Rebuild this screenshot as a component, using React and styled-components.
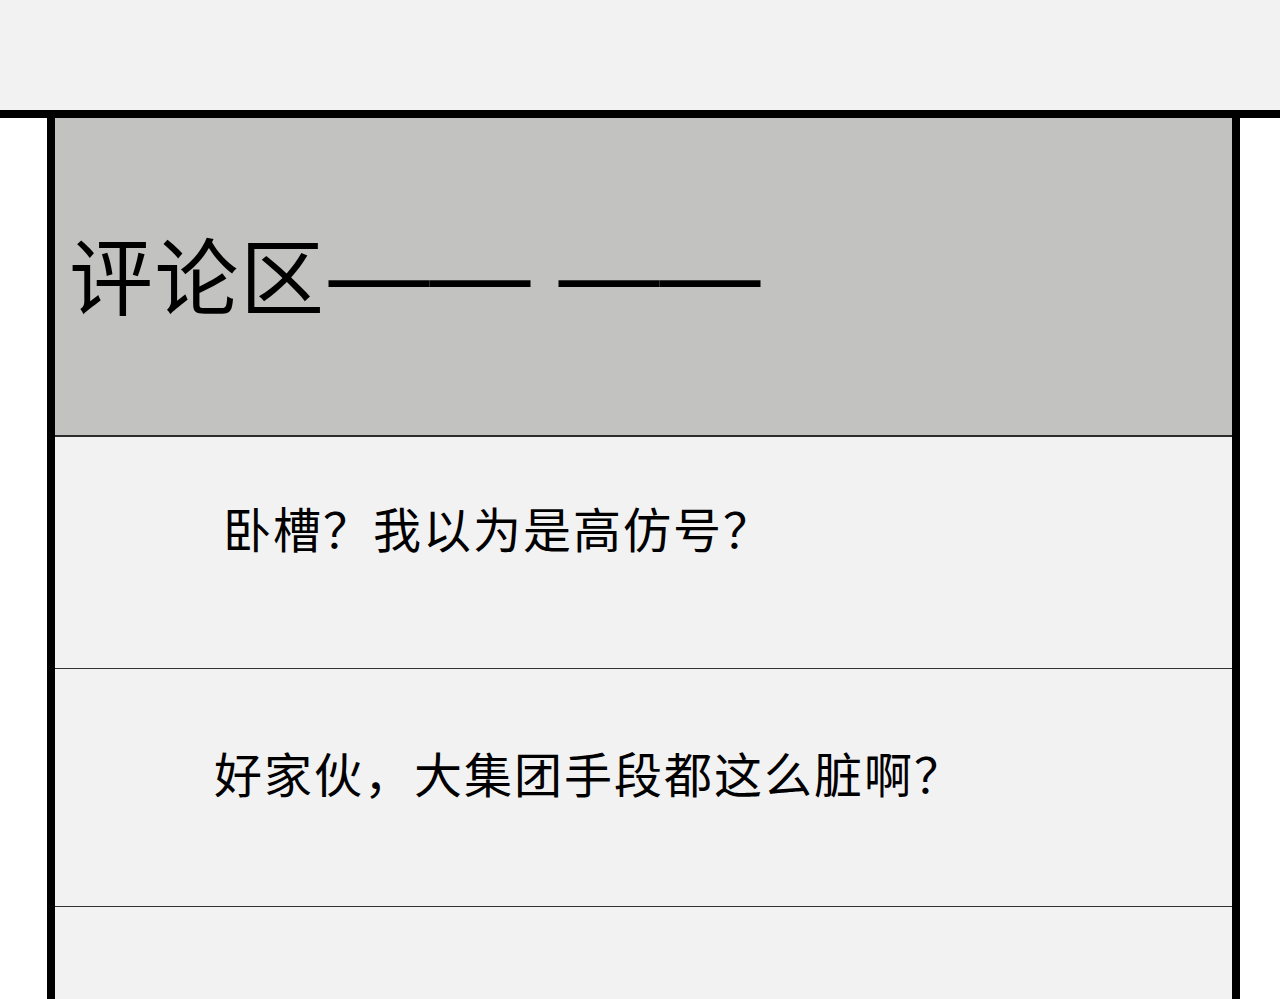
import styled, { createGlobalStyle } from "styled-components";

const GlobalStyle = createGlobalStyle`
  html, body {
    margin: 0;
    padding: 0;
    background: #ffffff;
  }
  body {
    font-family: "Noto Sans CJK SC", "Noto Sans", sans-serif;
    color: #000000;
  }
`;

const Page = styled.div`
  height: 999px;
  overflow: hidden;
  display: flex;
  flex-direction: column;
`;

const TopBand = styled.div`
  height: 110px;
  background: #f2f2f2;
  flex-shrink: 0;
`;

const Rule = styled.div`
  height: 8px;
  background: #000000;
  flex-shrink: 0;
`;

const Panel = styled.section`
  box-sizing: border-box;
  margin-left: 47px;
  width: 1193px;
  flex: 1;
  border-left: 8px solid #000000;
  border-right: 8px solid #000000;
  display: flex;
  flex-direction: column;
`;

const Header = styled.header`
  height: 319px;
  flex-shrink: 0;
  background: #c2c2c0;
  border-bottom: 2px solid #2b2b2b;
  padding: 106px 0 0 14px;
  box-sizing: border-box;
`;

const Title = styled.h1`
  margin: 0;
  font-weight: 400;
  font-size: 84px;
  letter-spacing: 1.5px;
  line-height: 1;
  white-space: nowrap;
`;

// long rules after the title, set in a Latin face so each dash spans a full em
const Dashes = styled.span`
  font-family: "Liberation Sans", Arial, sans-serif;
  font-size: 101px;
  letter-spacing: 0;
  margin-left: 3px;
  vertical-align: 0;
`;

const Row = styled.div`
  height: ${(p) => p.$height}px;
  flex-shrink: 0;
  background: #f2f2f2;
  border-bottom: ${(p) => (p.$last ? "none" : "1.5px solid #333333")};
  padding: ${(p) => p.$top}px 0 0 ${(p) => p.$left}px;
  box-sizing: border-box;
  ${(p) => (p.$last ? "flex: 1;" : "")}
`;

const Comment = styled.p`
  margin: 0;
  font-size: 48px;
  letter-spacing: 2px;
  line-height: 1;
  white-space: nowrap;
`;

const comments = [
  { text: "卧槽？我以为是高仿号？", height: 232, top: 66, left: 168 },
  { text: "好家伙，大集团手段都这么脏啊？", height: 238, top: 79, left: 159 },
];

export default function App() {
  return (
    <Page>
      <GlobalStyle />
      <TopBand />
      <Rule />
      <Panel>
        <Header>
          <Title>
            评论区<Dashes>—— ——</Dashes>
          </Title>
        </Header>
        {comments.map((c) => (
          <Row key={c.text} $height={c.height} $top={c.top} $left={c.left}>
            <Comment>{c.text}</Comment>
          </Row>
        ))}
        <Row $last $top={0} $left={0} />
      </Panel>
    </Page>
  );
}
